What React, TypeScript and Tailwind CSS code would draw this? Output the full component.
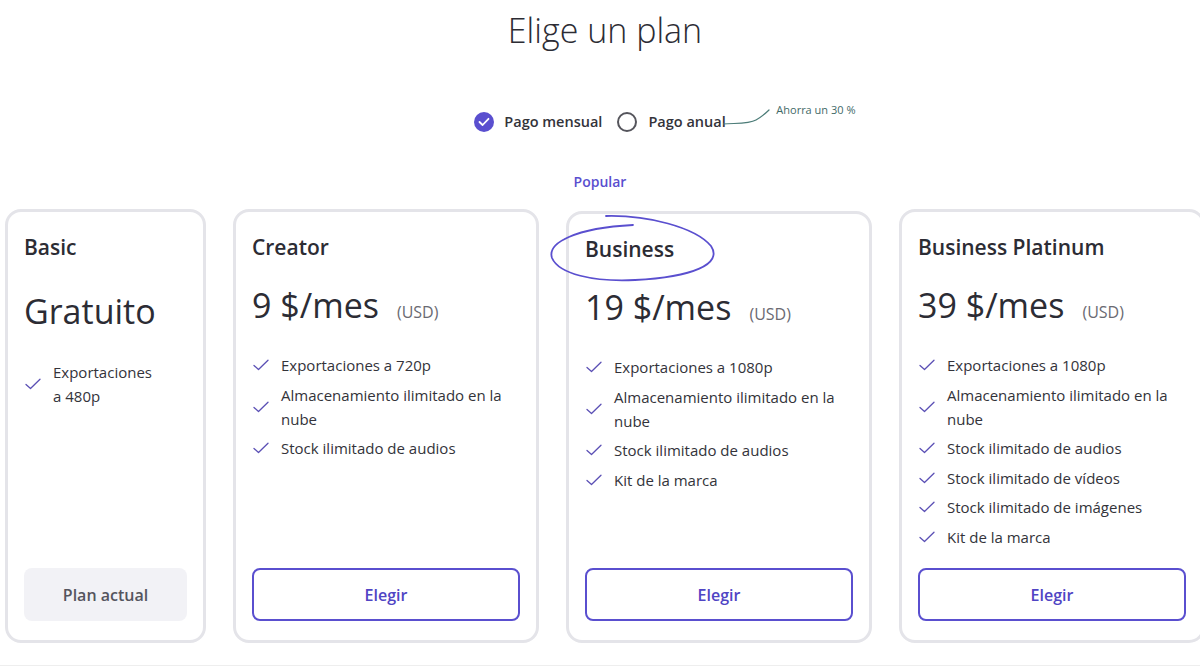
import React from "react";

function Check() {
  return (
    <svg width="16" height="12" viewBox="0 0 16 12" className="shrink-0 ml-[1px]">
      <path d="M1 6.5 L5.5 10.5 L15 1.2" fill="none" stroke="#5b50b5" strokeWidth="1.3" strokeLinecap="round" strokeLinejoin="round" />
    </svg>
  );
}

function Feature({ children }: { children: React.ReactNode }) {
  return (
    <li className="flex items-center gap-[12px] text-[15px] leading-[24px] text-[#33333a]">
      <Check />
      <span>{children}</span>
    </li>
  );
}

function Card({
  title,
  price,
  features,
  basic,
  business,
  width,
}: {
  title: string;
  price: React.ReactNode;
  features: React.ReactNode[];
  basic?: boolean;
  business?: boolean;
  width: string;
}) {
  return (
    <div
      className={`relative shrink-0 flex flex-col rounded-[16px] border-[3px] border-[#e4e4e9] bg-white px-[16px] pt-[21px] pb-[19px] ${width} ${
        business ? "mt-[2px] h-[432px]" : "h-[434px]"
      }`}
    >
      {business && (
        <svg
          width="180"
          height="74"
          viewBox="0 0 180 74"
          className="absolute left-[-22px] top-[-2px] pointer-events-none"
        >
          <path
            d="M59 4 C 100 3, 148 15, 164 34 C 176 52, 146 65, 88 68 C 46 70, 12 62, 5 46 C 0 31, 28 16, 86 13"
            fill="none"
            stroke="#5a4fcf"
            strokeWidth="1.8"
            strokeLinecap="round"
          />
        </svg>
      )}
      <div className="relative text-[21px] leading-[28px] font-semibold text-[#2c2c34]">{title}</div>
      <div className={`${basic ? "mt-[30px]" : "mt-[24px]"} flex items-baseline text-[#2c2c34]`}>
        {price}
      </div>
      <ul className={`${basic ? "mt-[29px]" : "mt-[28px]"} flex flex-col gap-[5.5px]`}>
        {features.map((f, i) => (
          <Feature key={i}>{f}</Feature>
        ))}
      </ul>
      <div className="mt-auto">
        {basic ? (
          <div className="flex h-[53px] items-center justify-center rounded-[8px] bg-[#f2f2f6] text-[16px] font-semibold text-[#55555e]">
            Plan actual
          </div>
        ) : (
          <div className="flex h-[53px] items-center justify-center rounded-[8px] border-2 border-[#5a4fcf] text-[16px] font-semibold text-[#5045c4]">
            Elegir
          </div>
        )}
      </div>
    </div>
  );
}

function Price({ amount }: { amount: string }) {
  return (
    <>
      <span className="text-[34px] leading-[40px] font-normal">{amount}</span>
      <span className="ml-[18px] text-[16px] text-[#6a6a72]">(USD)</span>
    </>
  );
}

export default function App() {
  return (
    <div
      className="relative h-[666px] w-[1200px] overflow-hidden border-b border-[#eeeeee] bg-white"
      style={{ fontFamily: '"Open Sans", "Noto Sans", sans-serif' }}
    >
      <div className="pt-[10px]">
        <h1 className="ml-[10px] text-center text-[34px] leading-[40px] font-light text-[#2c2c34]">
          Elige un plan
        </h1>
      </div>

      <div className="mt-[60px] flex justify-center">
        <div className="relative flex items-center">
          <span className="flex h-[20px] w-[20px] items-center justify-center rounded-full bg-[#5a4fcf]">
            <svg width="12" height="10" viewBox="0 0 12 10">
              <path d="M1.5 5 L4.6 8 L10.5 1.8" fill="none" stroke="white" strokeWidth="1.8" strokeLinecap="round" strokeLinejoin="round" />
            </svg>
          </span>
          <span className="ml-[10px] text-[14.5px] leading-[24px] font-semibold text-[#33333a]">Pago mensual</span>
          <span className="ml-[15px] h-[20px] w-[20px] rounded-full border-2 border-[#55555c]"></span>
          <span className="ml-[11px] text-[14.5px] leading-[24px] font-semibold text-[#33333a]">Pago anual</span>
          <svg
            width="50"
            height="22"
            viewBox="0 0 50 22"
            className="absolute left-[249px] top-[-3px]"
          >
            <path d="M0 17 C 14 16, 26 17, 33 13 C 38 10, 42 7, 46 3" fill="none" stroke="#4c7c78" strokeWidth="1.2" strokeLinecap="round" />
          </svg>
          <span className="absolute left-[302px] top-[-8px] whitespace-nowrap text-[11px] leading-[16px] text-[#3f6a68]">
            Ahorra un 30 %
          </span>
        </div>
      </div>

      <div className="mt-[38px] text-center text-[14px] leading-[20px] font-semibold text-[#5a4fcf]">Popular</div>

      <div className="mt-[17px] ml-[5px] flex items-start gap-[27px]">
        <Card
          basic
          width="w-[201px]"
          title="Basic"
          price={<span className="text-[34px] leading-[40px] font-normal">Gratuito</span>}
          features={[
            <>
              Exportaciones
              <br />a 480p
            </>,
          ]}
        />
        <Card
          width="w-[306px]"
          title="Creator"
          price={<Price amount="9 $/mes" />}
          features={["Exportaciones a 720p", "Almacenamiento ilimitado en la nube", "Stock ilimitado de audios"]}
        />
        <Card
          business
          width="w-[306px]"
          title="Business"
          price={<Price amount="19 $/mes" />}
          features={[
            "Exportaciones a 1080p",
            "Almacenamiento ilimitado en la nube",
            "Stock ilimitado de audios",
            "Kit de la marca",
          ]}
        />
        <Card
          width="w-[306px]"
          title="Business Platinum"
          price={<Price amount="39 $/mes" />}
          features={[
            "Exportaciones a 1080p",
            "Almacenamiento ilimitado en la nube",
            "Stock ilimitado de audios",
            "Stock ilimitado de vídeos",
            "Stock ilimitado de imágenes",
            "Kit de la marca",
          ]}
        />
      </div>
    </div>
  );
}
